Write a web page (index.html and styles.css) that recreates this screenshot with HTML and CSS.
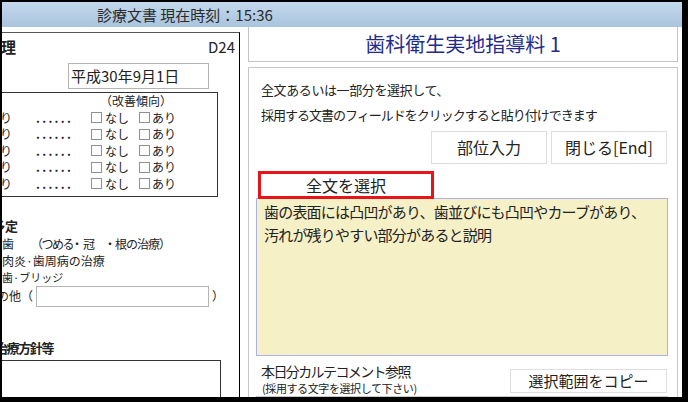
FILE: index.html
```html
<!DOCTYPE html>
<html lang="ja">
<head>
    <meta charset="UTF-8">
    <title>診療文書</title>
    <link rel="stylesheet" href="styles.css">
</head>
<body>
    <div class="frame">
        <div class="titlebar">診療文書 現在時刻：15:36</div>
        <div class="main">
            <div class="left">
                <div class="lhead">
                    <span class="lhead-title">管理</span>
                    <span class="lhead-code">D24</span>
                </div>
                <div class="datebox">平成30年9月1日</div>

                <div class="trend">
                    <div class="trend-head">（改善傾向）</div>
                    <div class="trow"><span class="tlabel">あり</span><span class="dots">......</span><span class="chk"></span><span class="opt">なし</span><span class="chk chk2"></span><span class="opt opt2">あり</span></div>
                    <div class="trow"><span class="tlabel">あり</span><span class="dots">......</span><span class="chk"></span><span class="opt">なし</span><span class="chk chk2"></span><span class="opt opt2">あり</span></div>
                    <div class="trow"><span class="tlabel">あり</span><span class="dots">......</span><span class="chk"></span><span class="opt">なし</span><span class="chk chk2"></span><span class="opt opt2">あり</span></div>
                    <div class="trow"><span class="tlabel">あり</span><span class="dots">......</span><span class="chk"></span><span class="opt">なし</span><span class="chk chk2"></span><span class="opt opt2">あり</span></div>
                    <div class="trow"><span class="tlabel">あり</span><span class="dots">......</span><span class="chk"></span><span class="opt">なし</span><span class="chk chk2"></span><span class="opt opt2">あり</span></div>
                </div>

                <div class="sec sec-plan"><span class="cut-plan">予定</span></div>
                <div class="pline">
                    <span class="cut-mushi">むし歯</span><span class="p-a">（つめる</span><span class="p-b">・冠</span><span class="p-c">・根の治療）</span>
                </div>
                <div class="pline"><span class="cut-niku">歯肉炎·歯周病の治療</span></div>
                <div class="pline pline-small"><span class="cut-gishi">義歯·ブリッジ</span></div>
                <div class="pline pline-other">
                    <span class="cut-sono">その他</span><span>（</span>
                    <span class="other-box"></span>
                    <span class="other-close">）</span>
                </div>

                <div class="sec sec-policy"><span class="cut-policy">治療方針等</span></div>
                <div class="policy-box"></div>
            </div>

            <div class="right">
                <div class="rhead">歯科衛生実地指導料 1</div>
                <div class="panel">
                    <div class="guide guide-1">全文あるいは一部分を選択して、</div>
                    <div class="guide guide-2">採用する文書のフィールドをクリックすると貼り付けできます</div>
                    <div class="btnrow">
                        <div class="btn">部位入力</div>
                        <div class="btn">閉じる[End]</div>
                    </div>
                    <div class="select-all">全文を選択</div>
                    <div class="doc-text">歯の表面には凸凹があり、歯並びにも凸凹やカーブがあり、<br>汚れが残りやすい部分があると説明</div>
                    <div class="comment-row">
                        <div class="comment-label">
                            <div class="comment-title">本日分カルテコメント参照</div>
                            <div class="comment-sub">(採用する文字を選択して下さい)</div>
                        </div>
                        <div class="btn btn-copy">選択範囲をコピー</div>
                    </div>
                    <div class="comment-box"></div>
                </div>
            </div>
        </div>
    </div>
</body>
</html>
```

FILE: styles.css
```css
body {
    margin: 0;
    padding: 0;
    background: #fff;
    font-family: "Noto Sans CJK JP", "Noto Sans", sans-serif;
    color: #222;
}
.frame {
    width: 688px;
    height: 402px;
    box-sizing: border-box;
    border-style: solid;
    border-color: #000;
    border-width: 2px 6px 5px 2px;
    overflow: hidden;
    background: #fff;
}
.titlebar {
    height: 25px;
    line-height: 25px;
    padding-left: 95px;
    font-size: 15px;
    color: #2a2a2a;
    background: linear-gradient(#c3d8eb, #a9c4dd);
}
.main {
    display: flex;
    align-items: flex-start;
}

/* left panel (scrolled, left side cut off) */
.left {
    width: 238px;
    height: 380px;
    box-sizing: border-box;
    margin-top: 5px;
    border-top: 1px solid #555;
    border-right: 1px solid #000;
    overflow: hidden;
    white-space: nowrap;
}
.lhead {
    display: flex;
    justify-content: space-between;
    margin-top: 4px;
    height: 20px;
    line-height: 20px;
    font-size: 15px;
    padding-right: 4px;
}
.lhead-title {
    font-weight: bold;
    margin-left: -16px;
}
.datebox {
    margin: 6px 0 0 66px;
    width: 141px;
    height: 26px;
    box-sizing: border-box;
    border: 1px solid #b4b4b4;
    font-size: 15px;
    line-height: 24px;
    padding-left: 2px;
}
.trend {
    margin: 3px 0 0 -10px;
    width: 226px;
    height: 105px;
    box-sizing: border-box;
    border: 1px solid #333;
    font-size: 12px;
}
.trend-head {
    height: 16.5px;
    line-height: 16.5px;
    padding-left: 107px;
}
.trow {
    display: flex;
    align-items: center;
    height: 16.5px;
    line-height: 16.5px;
}
.tlabel {
    display: inline-block;
    width: 24px;
    margin-left: -5px;
}
.dots {
    display: inline-block;
    width: 32px;
    margin-left: 24px;
    font-weight: bold;
    letter-spacing: 2.3px;
    line-height: 12px;
}
.chk {
    display: inline-block;
    width: 11px;
    height: 11px;
    box-sizing: border-box;
    border: 1px solid #909090;
    background: #fff;
    margin-left: 23px;
}
.chk2 {
    margin-left: 10px;
}
.opt {
    display: inline-block;
    width: 24px;
    margin-left: 3px;
}
.opt2 {
    margin-left: 2px;
}
.sec {
    height: 20px;
    line-height: 20px;
    font-size: 13px;
    font-weight: bold;
}
.sec-plan {
    margin-top: 19px;
}
.cut-plan {
    margin-left: -10px;
}
.pline {
    height: 16.5px;
    line-height: 16.5px;
    font-size: 12px;
}
.pline-small {
    font-size: 11px;
}
.cut-mushi {
    margin-left: -24px;
}
.p-a {
    display: inline-block;
    width: 40px;
    margin-left: 17px;
    letter-spacing: -1.5px;
}
.p-b {
    display: inline-block;
    width: 33px;
}
.p-c {
    letter-spacing: -1px;
}
.cut-niku {
    margin-left: -12px;
}
.cut-gishi {
    margin-left: -11px;
}
.pline-other {
    display: flex;
    align-items: center;
    height: 21px;
}
.cut-sono {
    margin-left: -17px;
}
.other-box {
    display: inline-block;
    width: 173px;
    height: 21px;
    box-sizing: border-box;
    border: 1px solid #b4b4b4;
    margin-left: 3px;
}
.other-close {
    margin-left: 3px;
}
.sec-policy {
    margin-top: 31px;
}
.cut-policy {
    margin-left: -7px;
    letter-spacing: -1.4px;
}
.policy-box {
    margin: 2px 0 0 -10px;
    width: 229px;
    height: 60px;
    box-sizing: border-box;
    border: 1px solid #333;
}

/* right column */
.right {
    width: 430px;
    margin-left: 8px;
}
.rhead {
    height: 35px;
    box-sizing: border-box;
    border: 1px solid #c4c4c4;
    border-top: none;
    text-align: center;
    line-height: 34px;
    font-size: 20px;
    color: #1f2c8c;
}
.panel {
    margin-top: 5px;
    height: 340px;
    box-sizing: border-box;
    border: 1px solid #c8c8c8;
    padding: 0 9px 0 7px;
}
.guide {
    height: 25px;
    line-height: 25px;
    font-size: 13px;
    padding-left: 5px;
    white-space: nowrap;
}
.guide-1 {
    margin-top: 9px;
    letter-spacing: -0.4px;
}
.guide-2 {
    letter-spacing: -1px;
}
.btnrow {
    display: flex;
    justify-content: flex-end;
    gap: 4px;
    margin-top: 4px;
    padding-right: 1px;
}
.btn {
    width: 116px;
    height: 33px;
    box-sizing: border-box;
    border: 1px solid #dedede;
    background: #fff;
    text-align: center;
    line-height: 31px;
    font-size: 16px;
}
.select-all {
    margin: 7px 0 0 2px;
    width: 176px;
    height: 28px;
    box-sizing: border-box;
    border: 3px solid #e8141b;
    background: #fff;
    text-align: center;
    line-height: 22px;
    font-size: 16px;
    position: relative;
}
.doc-text {
    margin-top: -1px;
    height: 158px;
    box-sizing: border-box;
    border: 1px solid #a9b3e6;
    background: #f5f0c6;
    padding: 1px 7px;
    font-size: 15px;
    line-height: 23px;
    letter-spacing: -0.8px;
    white-space: nowrap;
}
.comment-row {
    display: flex;
    justify-content: space-between;
    align-items: flex-start;
    margin-top: 7px;
}
.comment-label {
    padding-left: 5px;
    white-space: nowrap;
}
.comment-title {
    font-size: 14px;
    line-height: 17px;
    letter-spacing: -1.6px;
}
.comment-sub {
    margin-top: 2px;
    font-size: 11px;
    line-height: 13px;
    letter-spacing: -0.4px;
    padding-left: 1px;
}
.btn-copy {
    width: 157px;
    height: 24px;
    margin-top: 6px;
    margin-right: 1px;
    line-height: 22px;
    font-size: 15px;
}
.comment-box {
    margin-top: 1px;
    height: 30px;
    border: 1px solid #c8c8c8;
}
```
